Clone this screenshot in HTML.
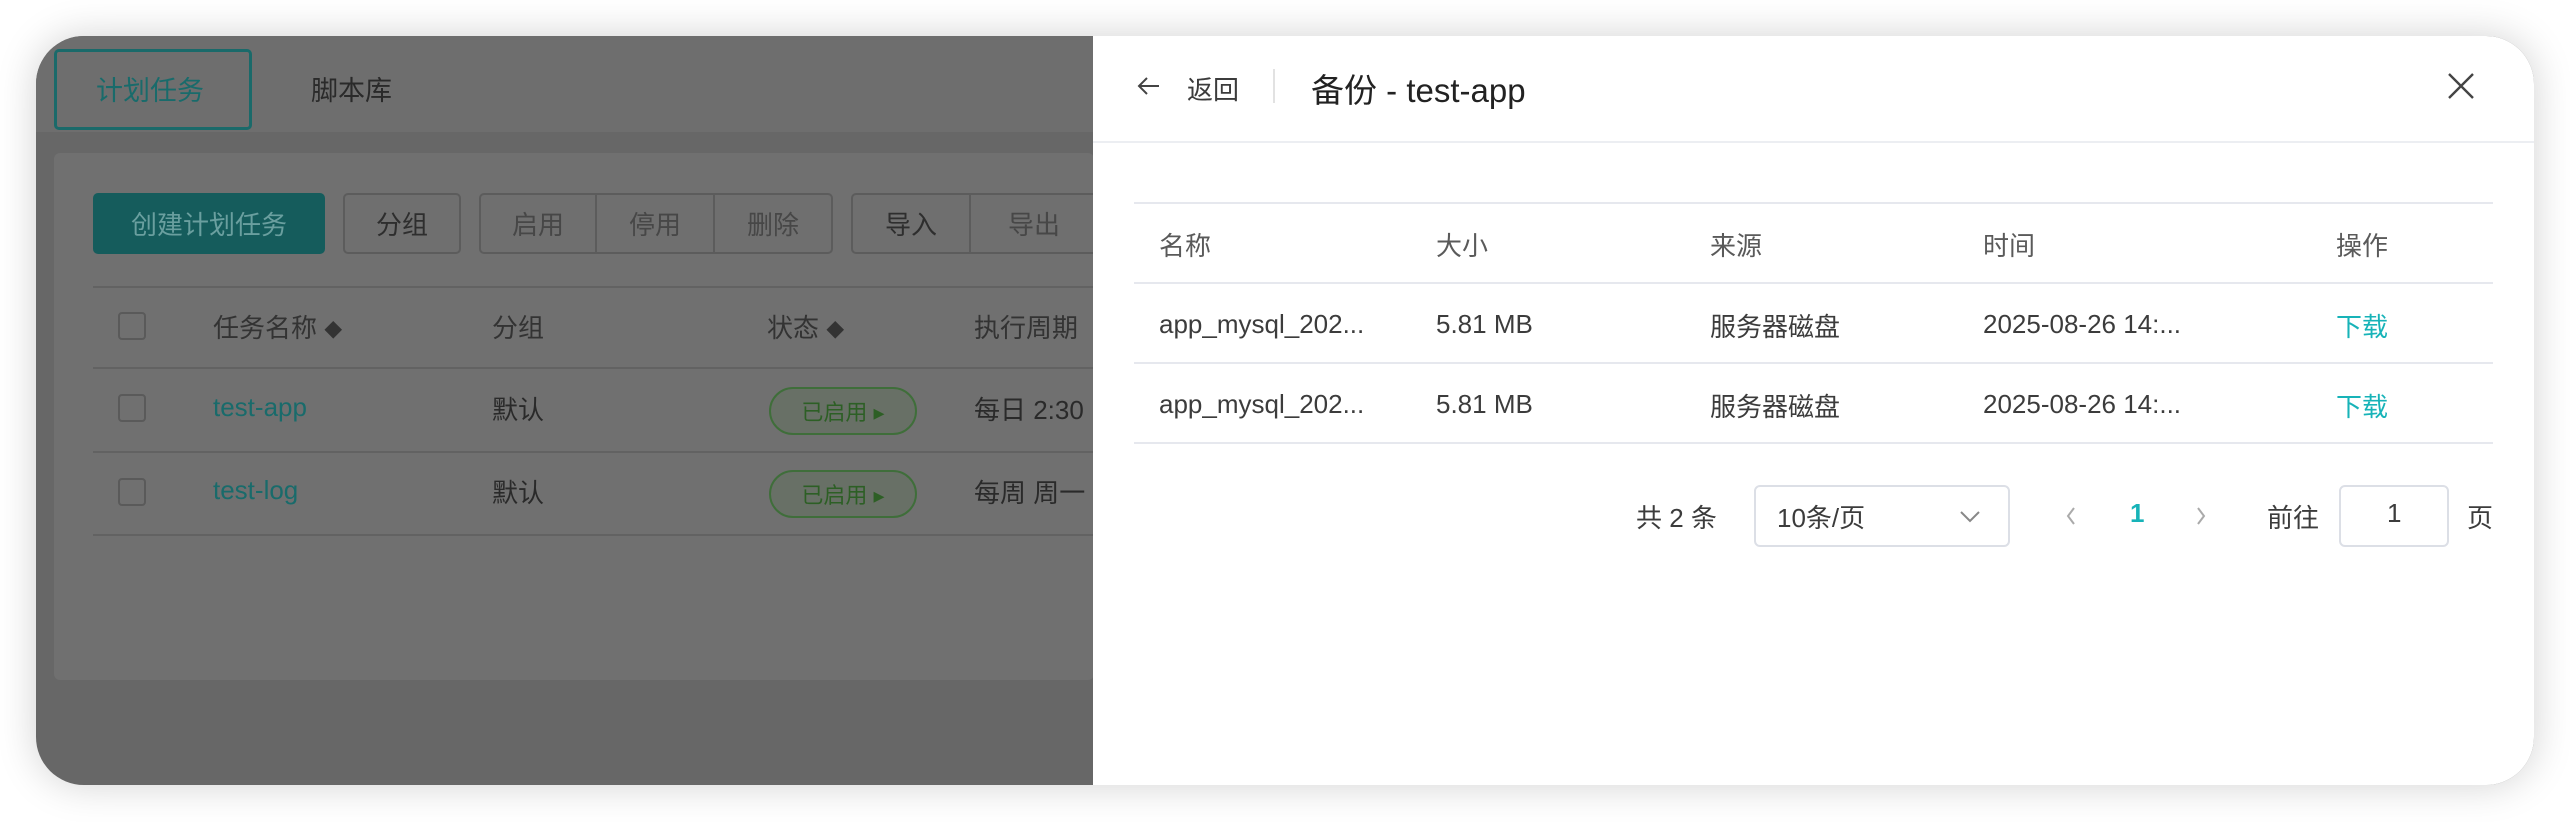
<!DOCTYPE html>
<html><head><meta charset="utf-8"><style>
*{box-sizing:border-box;margin:0;padding:0}
body{width:2570px;height:822px;background:#fff;font-family:"Liberation Sans","Noto Sans CJK SC",sans-serif;position:relative;overflow:hidden}
.win{position:absolute;left:36px;top:36px;width:2498px;height:749px;border-radius:48px;overflow:hidden;background:#676767;box-shadow:0 0 40px rgba(0,0,0,.18)}
.a{position:absolute;white-space:nowrap}
.tabbar{position:absolute;left:0;top:0;width:1060px;height:96px;background:#6e6e6e}
.card{position:absolute;left:18px;top:117px;width:1040px;height:527px;background:#707070;border-radius:6px}
.btn{position:absolute;top:157px;height:61px;border:2px solid #5c5c5c;border-radius:5px;color:#2e2e2e;font-size:26px;display:flex;align-items:center;justify-content:center;background:#6f6f6f}
.hl{position:absolute;left:57px;width:1010px;height:2px;background:#626262}
.cb{position:absolute;left:82px;width:28px;height:28px;border:2px solid #5a5a5a;border-radius:4px}
.t{font-size:26px;color:#2a2a2a}
.tag{position:absolute;left:733px;width:148px;height:48px;border:2px solid #3f6e3a;border-radius:24px;background:#687066;color:#2d5f25;font-size:22px;display:flex;align-items:center;justify-content:center}
.drawer{position:absolute;left:1057px;top:0;width:1441px;height:749px;background:#fff}
.d{font-size:26px;color:#3c3c3c}
.line{position:absolute;left:41px;width:1359px;height:2px;background:#e6e8ee}
</style></head><body>
<div class="win">
 <div class="tabbar"></div>
 <div class="a" style="left:18px;top:13px;width:198px;height:81px;border:3px solid #1a6a6a;border-radius:5px"></div>
 <div class="a t" style="left:60px;top:33px;color:#196b6b;font-size:27px">计划任务</div>
 <div class="a t" style="left:275px;top:33px;font-size:27px">脚本库</div>
 <div class="card"></div>
 <div class="btn" style="left:57px;width:232px;background:#155c5c;border-color:#155c5c;color:#6a9f9f">创建计划任务</div>
 <div class="btn" style="left:307px;width:118px">分组</div>
 <div class="btn" style="left:443px;width:118px;color:#474747;border-radius:5px 0 0 5px">启用</div>
 <div class="btn" style="left:559px;width:120px;color:#474747;border-radius:0">停用</div>
 <div class="btn" style="left:677px;width:120px;color:#474747;border-radius:0 5px 5px 0">删除</div>
 <div class="btn" style="left:815px;width:120px;border-radius:5px 0 0 5px">导入</div>
 <div class="btn" style="left:933px;width:130px;color:#474747;border-radius:0">导出</div>
 <div class="hl" style="top:250px"></div>
 <div class="hl" style="top:331px"></div>
 <div class="hl" style="top:415px"></div>
 <div class="hl" style="top:498px"></div>
 <div class="cb" style="top:276px"></div><div class="cb" style="top:358px"></div><div class="cb" style="top:442px"></div>
 <div class="a t" style="left:177px;top:272px;color:#333">任务名称 <span style="font-size:18px">◆</span></div>
 <div class="a t" style="left:456px;top:272px;color:#333">分组</div>
 <div class="a t" style="left:731px;top:272px;color:#333">状态 <span style="font-size:18px">◆</span></div>
 <div class="a t" style="left:938px;top:272px;color:#333">执行周期</div>
 <div class="a t" style="left:177px;top:356px;color:#196b6b">test-app</div>
 <div class="a t" style="left:456px;top:354px">默认</div>
 <div class="tag" style="top:351px">已启用 ▸</div>
 <div class="a t" style="left:938px;top:354px">每日 2:30</div>
 <div class="a t" style="left:177px;top:439px;color:#196b6b">test-log</div>
 <div class="a t" style="left:456px;top:437px">默认</div>
 <div class="tag" style="top:434px">已启用 ▸</div>
 <div class="a t" style="left:938px;top:437px">每周 周一</div>

 <div class="drawer">
  <svg class="a" style="left:43px;top:37px" width="26" height="26" viewBox="0 0 26 26"><path d="M23 13H4M11 5l-8 8 8 8" fill="none" stroke="#444" stroke-width="2"/></svg>
  <div class="a d" style="left:94px;top:34px">返回</div>
  <div class="a" style="left:180px;top:33px;width:2px;height:34px;background:#e2e2e2"></div>
  <div class="a" style="left:218px;top:28px;font-size:33px;color:#222">备份 - test-app</div>
  <svg class="a" style="left:1353px;top:35px" width="30" height="30" viewBox="0 0 30 30"><path d="M3 3L27 27M27 3L3 27" stroke="#444" stroke-width="2.4"/></svg>
  <div class="a" style="left:0;top:105px;width:1441px;height:2px;background:#eceef2"></div>
  <div class="line" style="top:166px"></div>
  <div class="line" style="top:246px"></div>
  <div class="line" style="top:326px"></div>
  <div class="line" style="top:406px"></div>
  <div class="a d" style="left:66px;top:190px;color:#5a5a5a">名称</div>
  <div class="a d" style="left:343px;top:190px;color:#5a5a5a">大小</div>
  <div class="a d" style="left:617px;top:190px;color:#5a5a5a">来源</div>
  <div class="a d" style="left:890px;top:190px;color:#5a5a5a">时间</div>
  <div class="a d" style="left:1243px;top:190px;color:#5a5a5a">操作</div>
  <div class="a d" style="left:66px;top:273px">app_mysql_202...</div>
  <div class="a d" style="left:343px;top:273px">5.81 MB</div>
  <div class="a d" style="left:617px;top:271px">服务器磁盘</div>
  <div class="a d" style="left:890px;top:273px">2025-08-26 14:...</div>
  <div class="a d" style="left:1243px;top:271px;color:#17b3b8">下载</div>
  <div class="a d" style="left:66px;top:353px">app_mysql_202...</div>
  <div class="a d" style="left:343px;top:353px">5.81 MB</div>
  <div class="a d" style="left:617px;top:351px">服务器磁盘</div>
  <div class="a d" style="left:890px;top:353px">2025-08-26 14:...</div>
  <div class="a d" style="left:1243px;top:351px;color:#17b3b8">下载</div>
  <div class="a d" style="left:543px;top:462px">共 2 条</div>
  <div class="a" style="left:661px;top:449px;width:256px;height:62px;border:2px solid #dcdfe6;border-radius:6px"></div>
  <div class="a d" style="left:684px;top:462px">10条/页</div>
  <svg class="a" style="left:866px;top:470px" width="22" height="20" viewBox="0 0 22 20"><path d="M2 6l9 9 9-9" fill="none" stroke="#888" stroke-width="2"/></svg>
  <svg class="a" style="left:971px;top:469px" width="14" height="22" viewBox="0 0 14 22"><path d="M10 3L4 11l6 8" fill="none" stroke="#aaa" stroke-width="2"/></svg>
  <div class="a d" style="left:1037px;top:462px;color:#17b3b8;font-weight:bold">1</div>
  <svg class="a" style="left:1101px;top:469px" width="14" height="22" viewBox="0 0 14 22"><path d="M4 3l6 8-6 8" fill="none" stroke="#aaa" stroke-width="2"/></svg>
  <div class="a d" style="left:1174px;top:462px">前往</div>
  <div class="a" style="left:1246px;top:449px;width:110px;height:62px;border:2px solid #dcdfe6;border-radius:6px"></div>
  <div class="a d" style="left:1294px;top:462px">1</div>
  <div class="a d" style="left:1374px;top:462px">页</div>
 </div>
</div>
</body></html>
